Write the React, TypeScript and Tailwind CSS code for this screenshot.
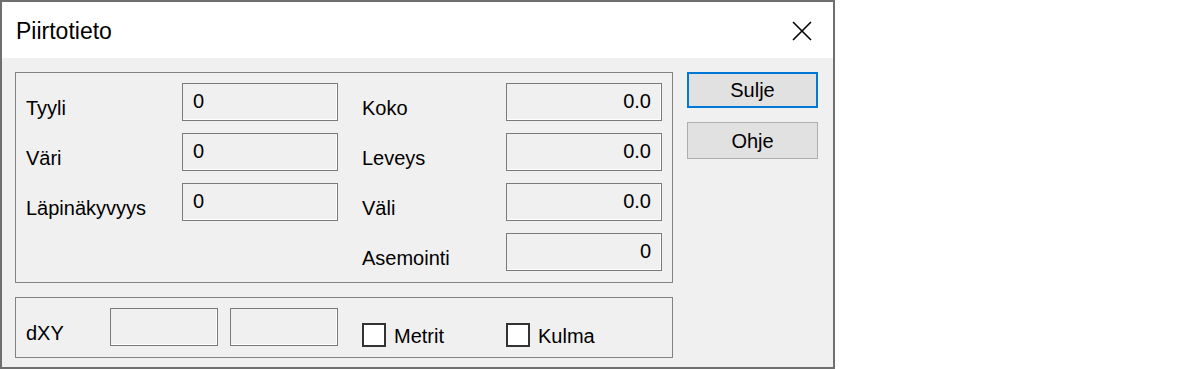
import React from "react";

const font = { fontFamily: '"Liberation Sans", Arial, sans-serif' };

const Field = ({ value = "", align = "left", w = "w-[156px]" }: { value?: string; align?: "left" | "right"; w?: string }) => (
  <div
    className={`${w} h-[38px] border border-[#7a7a7a] bg-[#f0f0f0] shadow-[inset_-1px_-1px_0_#ffffff] px-[10px] pt-[5px] leading-[24px] ${
      align === "right" ? "text-right" : "text-left"
    }`}
  >
    {value}
  </div>
);

const Label = ({ text, w }: { text: string; w: string }) => (
  <div className={`${w} h-[38px] flex items-end leading-[24px] pb-[1px]`}>{text}</div>
);

const Check = ({ label, w }: { label: string; w: string }) => (
  <div className={`${w} self-start flex items-center gap-[8px] mt-[14px]`}>
    <div className="w-[24px] h-[24px] border-2 border-[#333333] bg-white" />
    <span className="leading-[24px] mt-[2px]">{label}</span>
  </div>
);

export default function App() {
  const left = [
    ["Tyyli", "0"],
    ["Väri", "0"],
    ["Läpinäkyvyys", "0"],
  ];
  const right = [
    ["Koko", "0.0"],
    ["Leveys", "0.0"],
    ["Väli", "0.0"],
    ["Asemointi", "0"],
  ];

  return (
    <div className="w-[1200px] h-[369px] bg-white text-[20px] text-black" style={font}>
      <div className="w-[835px] h-[369px] border-2 border-[#6f6f6f] flex flex-col">
        {/* title bar */}
        <div className="h-[56px] bg-white flex items-center justify-between pl-[14px] pr-[20px]">
          <span className="text-[23px] leading-[28px] mt-[2px]">Piirtotieto</span>
          <svg width="22" height="22" viewBox="0 0 22 22" className="mt-[1px]">
            <path d="M2 2 L20 20 M20 2 L2 20" stroke="#000" strokeWidth="1.6" />
          </svg>
        </div>

        {/* body */}
        <div className="flex-1 bg-[#f0f0f0] flex pl-[13px] pt-[14px] gap-[14px]">
          <div className="flex flex-col gap-[14px]">
            {/* group 1 */}
            <div className="w-[658px] h-[211px] border border-[#828282] pl-[10px] pt-[10px] flex">
              <div className="flex flex-col gap-[12px]">
                {left.map(([l, v]) => (
                  <div key={l} className="flex">
                    <Label text={l} w="w-[156px]" />
                    <Field value={v} />
                  </div>
                ))}
              </div>
              <div className="flex flex-col gap-[12px] ml-[24px]">
                {right.map(([l, v]) => (
                  <div key={l} className="flex">
                    <Label text={l} w="w-[144px]" />
                    <Field value={v} align="right" />
                  </div>
                ))}
              </div>
            </div>

            {/* group 2 */}
            <div className="w-[658px] h-[61px] border border-[#828282] pl-[10px] pt-[10px] flex">
              <Label text="dXY" w="w-[84px]" />
              <Field w="w-[108px]" />
              <div className="ml-[12px]">
                <Field w="w-[108px]" />
              </div>
              <div className="ml-[24px]" />
              <Check label="Metrit" w="w-[144px]" />
              <Check label="Kulma" w="w-[120px]" />
            </div>
          </div>

          {/* buttons */}
          <div className="flex flex-col gap-[14px]">
            <button className="w-[131px] h-[36px] border-2 border-[#0078d7] bg-[#e1e1e1] leading-[24px]">
              Sulje
            </button>
            <button className="w-[131px] h-[37px] border border-[#adadad] bg-[#e1e1e1] leading-[24px]">
              Ohje
            </button>
          </div>
        </div>
      </div>
    </div>
  );
}
